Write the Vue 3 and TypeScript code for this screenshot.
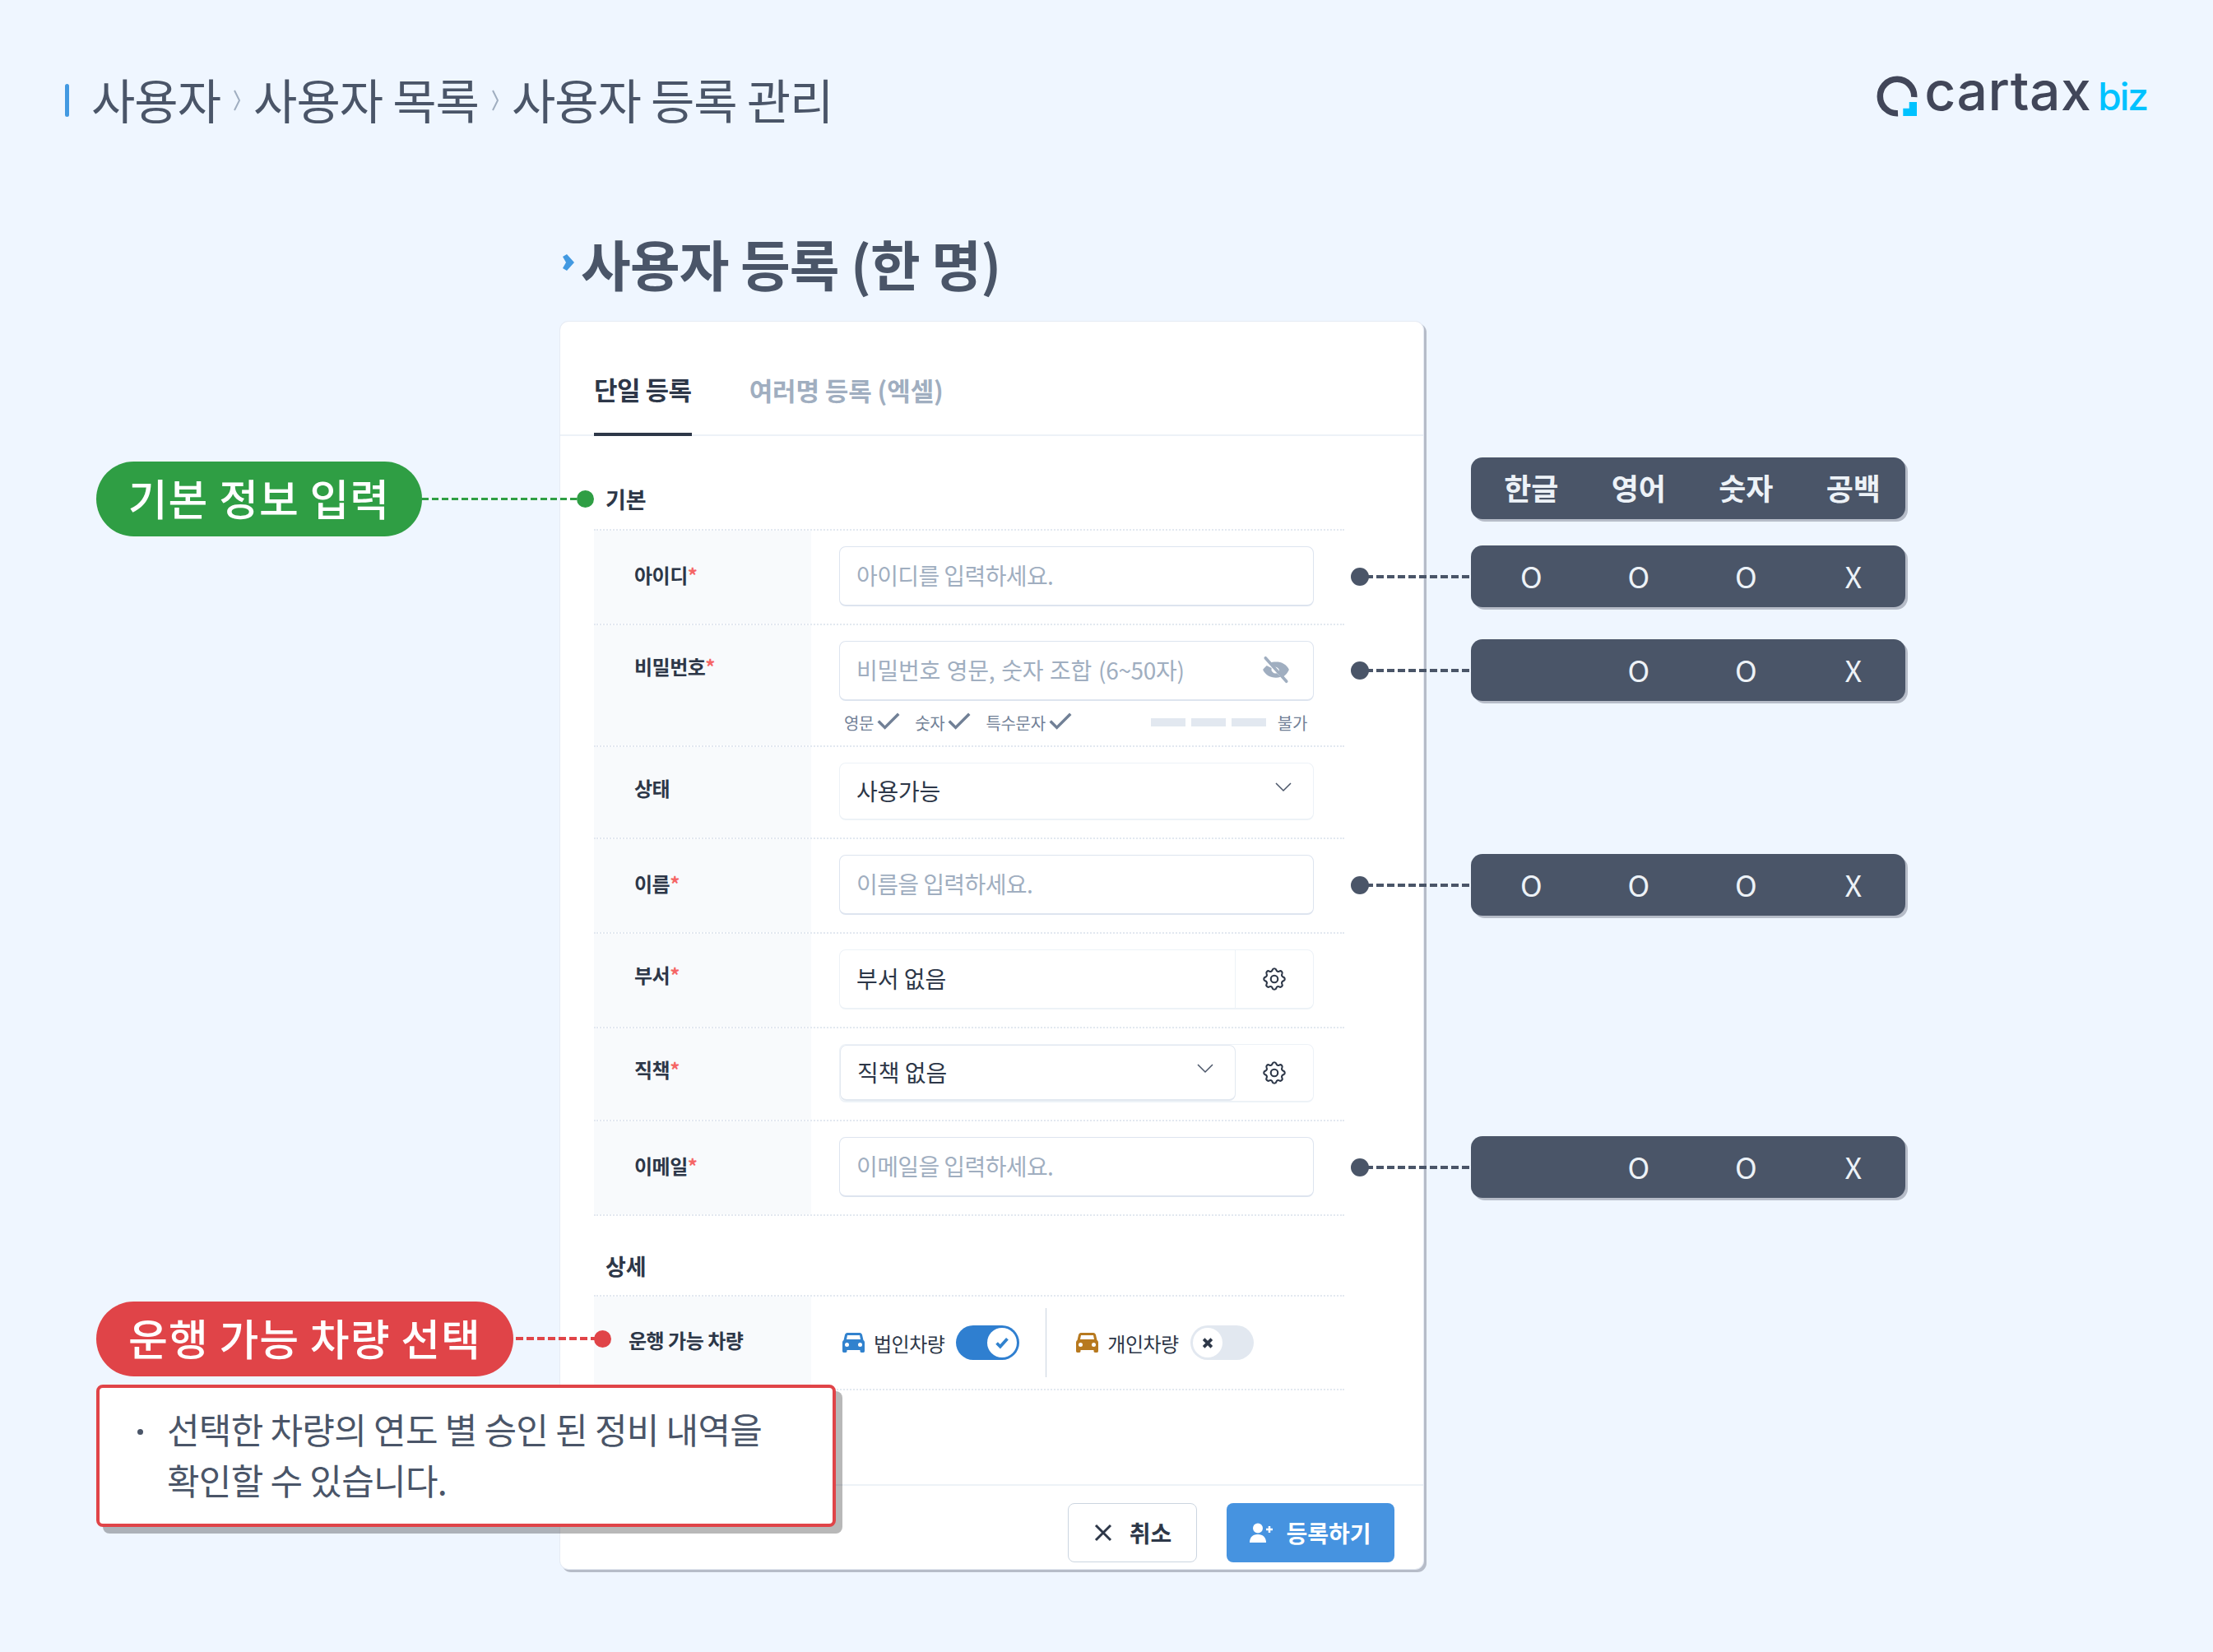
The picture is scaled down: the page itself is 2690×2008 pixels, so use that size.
<script setup lang="ts">
interface FormRow {
  label: string;
  required?: boolean;
  kind: 'input' | 'password' | 'select' | 'addon' | 'select-addon';
  text: string;
}

const rows: FormRow[] = [
  { label: '아이디', required: true, kind: 'input', text: '아이디를 입력하세요.' },
  { label: '비밀번호', required: true, kind: 'password', text: '비밀번호 영문, 숫자 조합 (6~50자)' },
  { label: '상태', kind: 'select', text: '사용가능' },
  { label: '이름', required: true, kind: 'input', text: '이름을 입력하세요.' },
  { label: '부서', required: true, kind: 'addon', text: '부서 없음' },
  { label: '직책', required: true, kind: 'select-addon', text: '직책 없음' },
  { label: '이메일', required: true, kind: 'input', text: '이메일을 입력하세요.' },
];

const hints = ['영문', '숫자', '특수문자'];

// 입력 규칙 표: 각 행의 위치는 폼 행에 맞춘다
const ruleRows = [
  { top: 663, cells: ['O', 'O', 'O', 'X'] },
  { top: 777, cells: ['', 'O', 'O', 'X'] },
  { top: 1038, cells: ['O', 'O', 'O', 'X'] },
  { top: 1381, cells: ['', 'O', 'O', 'X'] },
];
</script>

<template>
  <div class="page">
    <header class="top-bar">
      <div class="crumbs">
        <span class="crumb-bar"></span>
        <span>사용자</span>
        <svg class="crumb-sep" viewBox="0 0 10 30"><path d="M2 3l6 12-6 12" /></svg>
        <span>사용자 목록</span>
        <svg class="crumb-sep" viewBox="0 0 10 30"><path d="M2 3l6 12-6 12" /></svg>
        <span>사용자 등록 관리</span>
      </div>
      <div class="logo">
        <svg class="logo-mark" viewBox="0 0 50 50">
          <path d="M26 45.700A20.700 20.700 0 1 1 45.700 26" fill="none" stroke="#414659" stroke-width="7.500" />
          <path d="M39.700 32H49V49H32.300V39.700H39.700z" fill="#00c2ff" />
        </svg>
        <span class="logo-name">cartax</span>
        <span class="logo-biz">biz</span>
      </div>
    </header>

    <h1 class="title">
      <svg class="title-mark" viewBox="0 0 14 20"><path d="M0 3l5-3 9 10-9 10-5-3 4-7z" /></svg>
      사용자 등록 (한 명)
    </h1>

    <section class="card">
      <nav class="tabs">
        <span class="tab active">단일 등록</span>
        <span class="tab">여러명 등록 (엑셀)</span>
      </nav>

      <div class="body">
        <h2 class="group-title first">기본</h2>
        <div class="rows">
          <div v-for="row in rows" :key="row.label" class="row">
            <div class="label" :class="{ raised: row.kind !== 'input' }">
              {{ row.label }}<span v-if="row.required" class="req">*</span>
            </div>
            <div class="field">
              <div v-if="row.kind === 'input'" class="control placeholder">{{ row.text }}</div>

              <template v-else-if="row.kind === 'password'">
                <div class="control placeholder pw">
                  {{ row.text }}
                  <svg class="eye" viewBox="0 0 24 24">
                    <path d="M12 5.500c-2 0-3.800.600-5.300 1.500l3 3a3.500 3.500 0 0 1 4.600 4.600l3.300 3.300c2.300-1.500 4-3.500 5-5.900-1.800-4-5.800-6.500-10.600-6.500z" />
                    <path d="M4.500 8.600C3.100 9.800 2 11.300 1.400 12c1.800 4 5.800 6.500 10.600 6.500 1.300 0 2.500-.2 3.700-.6l-3-3a3.500 3.500 0 0 1-4.300-4.300z" />
                    <path class="slash" d="M3.500 2.500l17 19" />
                  </svg>
                </div>
                <div class="hints">
                  <span v-for="hint in hints" :key="hint" class="hint">
                    {{ hint }}
                    <svg viewBox="0 0 32 24"><path d="M2 12l9 9L30 2" /></svg>
                  </span>
                  <span class="meter"><i></i><i></i><i></i></span>
                  <span class="meter-text">불가</span>
                </div>
              </template>

              <div v-else-if="row.kind === 'select'" class="control select">
                {{ row.text }}
                <svg class="chev" viewBox="0 0 20 12"><path d="M1 1l9 9 9-9" /></svg>
              </div>

              <div v-else class="group" :class="{ tall: row.kind === 'addon' }">
                <div v-if="row.kind === 'addon'" class="group-main">{{ row.text }}</div>
                <div v-else class="group-select">
                  {{ row.text }}
                  <svg class="chev" viewBox="0 0 20 12"><path d="M1 1l9 9 9-9" /></svg>
                </div>
                <div class="group-btn">
                  <svg class="gear" viewBox="0 0 24 24">
                    <path d="M10.325 4.317c.426-1.756 2.924-1.756 3.350 0a1.724 1.724 0 0 0 2.573 1.066c1.543-.940 3.310.826 2.370 2.370a1.724 1.724 0 0 0 1.065 2.572c1.756.426 1.756 2.924 0 3.350a1.724 1.724 0 0 0-1.066 2.573c.940 1.543-.826 3.310-2.370 2.370a1.724 1.724 0 0 0-2.572 1.065c-.426 1.756-2.924 1.756-3.350 0a1.724 1.724 0 0 0-2.573-1.066c-1.543.940-3.310-.826-2.370-2.370a1.724 1.724 0 0 0-1.065-2.572c-1.756-.426-1.756-2.924 0-3.350a1.724 1.724 0 0 0 1.066-2.573c-.940-1.543.826-3.310 2.370-2.370.996.608 2.296.070 2.572-1.065z" />
                    <circle cx="12" cy="12" r="3" />
                  </svg>
                </div>
              </div>
            </div>
          </div>
        </div>

        <h2 class="group-title second">상세</h2>
        <div class="rows detail">
          <div class="row">
            <div class="label narrow">운행 가능 차량</div>
            <div class="field vehicles">
              <svg class="car blue" viewBox="0 0 27 24">
                <path d="M6 0h15c1.500 0 2.500 1 3 2.500L25.500 9c1 .6 1.500 1.500 1.500 3v10c0 1-.6 2-1.500 2H23c-1 0-1.500-1-1.500-2v-1h-16v1c0 1-.5 2-1.500 2H1.500C.6 24 0 23 0 22V12c0-1.500.5-2.400 1.500-3L3 2.500C3.500 1 4.500 0 6 0zm0 3L5 8h17l-1-5zM5.500 12a2.500 2.500 0 1 0 0 5 2.500 2.500 0 0 0 0-5zm16 0a2.500 2.500 0 1 0 0 5 2.500 2.500 0 0 0 0-5z" />
              </svg>
              <span class="vehicle-name">법인차량</span>
              <span class="switch on">
                <span class="knob">
                  <svg viewBox="0 0 16 14"><path d="M2 7l4 4 8-9" /></svg>
                </span>
              </span>
              <span class="vline"></span>
              <svg class="car brown" viewBox="0 0 27 24">
                <path d="M6 0h15c1.500 0 2.500 1 3 2.500L25.500 9c1 .6 1.500 1.500 1.500 3v10c0 1-.6 2-1.500 2H23c-1 0-1.500-1-1.500-2v-1h-16v1c0 1-.5 2-1.500 2H1.500C.6 24 0 23 0 22V12c0-1.500.5-2.400 1.500-3L3 2.500C3.500 1 4.500 0 6 0zm0 3L5 8h17l-1-5zM5.500 12a2.500 2.500 0 1 0 0 5 2.500 2.500 0 0 0 0-5zm16 0a2.500 2.500 0 1 0 0 5 2.500 2.500 0 0 0 0-5z" />
              </svg>
              <span class="vehicle-name">개인차량</span>
              <span class="switch off">
                <span class="knob">
                  <svg viewBox="0 0 14 14"><path d="M2.500 2.500l9 9M11.500 2.500l-9 9" /></svg>
                </span>
              </span>
            </div>
          </div>
        </div>
      </div>

      <footer class="foot">
        <button class="btn cancel">
          <svg viewBox="0 0 24 24"><path d="M3 3l18 18M21 3L3 21" /></svg>
          취소
        </button>
        <button class="btn save">
          <svg viewBox="0 0 28 24">
            <circle cx="10" cy="6.500" r="6" />
            <path d="M0 24c0-6 3.500-10 10-10s10 4 10 10z" />
            <path d="M20 8h8M24 4v8" class="plus" />
          </svg>
          등록하기
        </button>
      </footer>
    </section>

    <!-- 주석 레이어 -->
    <div class="pill green">기본 정보 입력</div>
    <span class="wire green-wire"></span>
    <span class="dot green-dot"></span>

    <div class="pill red">운행 가능 차량 선택</div>
    <span class="wire red-wire"></span>
    <span class="dot red-dot"></span>

    <div class="note">
      <p>선택한 차량의 연도 별 승인 된 정비 내역을<br />확인할 수 있습니다.</p>
    </div>

    <div class="rule head">
      <span>한글</span><span>영어</span><span>숫자</span><span>공백</span>
    </div>
    <template v-for="r in ruleRows" :key="r.top">
      <div class="rule" :style="{ top: r.top + 'px' }">
        <span v-for="(c, i) in r.cells" :key="i">{{ c }}</span>
      </div>
      <span class="rule-wire" :style="{ top: r.top + 36 + 'px' }"></span>
      <span class="rule-dot" :style="{ top: r.top + 27 + 'px' }"></span>
    </template>
  </div>
</template>

<style>
html,
body {
  margin: 0;
  background: #eff6ff;
}
</style>

<style scoped>
.page {
  position: relative;
  width: 2690px;
  height: 2008px;
  box-sizing: border-box;
  padding: 78px 80px 0 79px;
  background: #eff6ff;
  color: #4a5568;
  font-family: "Noto Sans CJK KR", "Noto Sans", sans-serif;
  overflow: hidden;
}

.top-bar {
  display: flex;
  align-items: flex-start;
  justify-content: space-between;
  height: 84px;
}

.crumbs {
  display: flex;
  align-items: center;
  height: 84px;
  font-size: 58px;
  letter-spacing: -1px;
  color: #4a5568;
}

.crumb-bar {
  width: 5px;
  height: 40px;
  margin: 4px 27px 0 0;
  border-radius: 3px;
  background: #4299e1;
}

.crumb-sep {
  width: 10px;
  height: 30px;
  margin: 4px 15px 0;
  fill: none;
  stroke: #a0aec0;
  stroke-width: 2;
}

.logo {
  display: flex;
  align-items: flex-start;
}

.logo-mark {
  width: 50px;
  height: 50px;
  margin: 14px 8px 0 0;
}

.logo-name {
  margin-top: -4px;
  font-family: "Inter", sans-serif;
  font-size: 66px;
  line-height: 72px;
  font-weight: 500;
  letter-spacing: 0.5px;
  color: #414659;
}

.logo-biz {
  margin: 3px 0 0 8px;
  font-family: "Inter", sans-serif;
  font-size: 46px;
  line-height: 72px;
  font-weight: 500;
  letter-spacing: -2px;
  color: #00c2ff;
}

.title {
  display: flex;
  align-items: center;
  gap: 8px;
  height: 90px;
  margin: 112px 0 0 605px;
  font-size: 66px;
  font-weight: 700;
  letter-spacing: -0.8px;
  color: #4a5568;
}

.title-mark {
  width: 14px;
  height: 20px;
  fill: #4299e1;
}

.card {
  display: flex;
  flex-direction: column;
  box-sizing: border-box;
  width: 1049px;
  height: 1516px;
  margin: 27px 0 0 602px;
  border-radius: 10px;
  background: #fff;
  box-shadow: 0 0 0 1px #e6ebf4, 3px 3px 0 1px #b6bcc8;
}

.tabs {
  display: flex;
  gap: 70px;
  height: 139px;
  box-sizing: border-box;
  padding: 0 41px;
  border-bottom: 2px solid #edf2f7;
}

.tab {
  display: flex;
  align-items: center;
  height: 139px;
  padding-top: 26px;
  box-sizing: border-box;
  font-size: 31px;
  font-weight: 700;
  letter-spacing: -0.1px;
  color: #a0aec0;
}

.tab.active {
  padding-top: 28px;
  color: #2d3748;
  border-bottom: 4px solid #2d3748;
  letter-spacing: -0.5px;
}

.body {
  padding: 0 96px 0 41px;
}

.group-title {
  display: flex;
  align-items: center;
  height: 44px;
  margin: 0;
  padding-left: 14px;
  font-size: 27px;
  font-weight: 700;
  color: #2d3748;
}

.group-title.first {
  margin-top: 54px;
  margin-bottom: 15px;
}

.group-title.second {
  margin-top: 38px;
  margin-bottom: 14px;
}

.rows {
  border-bottom: 2px dotted #e2e8f0;
}

.row {
  display: grid;
  grid-template-columns: 264px 1fr;
  border-top: 2px dotted #e2e8f0;
}

.label {
  padding: 37px 0 0 49px;
  background: #f8fafc;
  font-size: 24px;
  line-height: 34px;
  font-weight: 700;
  letter-spacing: -0.5px;
  color: #2d3748;
}

.label.raised {
  padding-top: 33px;
}

.label.narrow {
  padding: 36px 0 0 42px;
}

.req {
  color: #f56565;
}

.field {
  padding: 19px 37px 21px 34px;
}

.control {
  display: flex;
  align-items: center;
  box-sizing: border-box;
  height: 73px;
  padding: 0 20px 2px;
  border: 1px solid #cbd5e0;
  border-bottom-width: 2px;
  border-radius: 8px;
  background: #fff;
  font-size: 28px;
  letter-spacing: -0.6px;
}

.placeholder {
  border-color: #dde4ef;
  color: #a0aec0;
}

.pw {
  justify-content: space-between;
  padding-right: 27px;
  letter-spacing: -0.3px;
  word-spacing: 2px;
}

.eye {
  width: 36px;
  height: 36px;
  fill: #a0aec0;
}

.eye .slash {
  fill: none;
  stroke: #a0aec0;
  stroke-width: 2.400;
  stroke-linecap: round;
}

.hints {
  display: flex;
  align-items: center;
  height: 24px;
  margin: 14px 0 -5px 6px;
  font-size: 20px;
  letter-spacing: -0.3px;
  color: #718096;
}

.hint {
  display: flex;
  align-items: center;
  gap: 4px;
  margin-right: 18px;
}

.hint svg {
  width: 28px;
  height: 21px;
  fill: none;
  stroke: #718096;
  stroke-width: 4;
  transform: translateY(-2px);
}

.meter {
  display: flex;
  gap: 7px;
  margin-left: auto;
  margin-right: 14px;
}

.meter i {
  display: block;
  width: 42px;
  height: 10px;
  background: #e2e8f0;
}

.meter-text {
  margin-right: 8px;
}

.select {
  justify-content: space-between;
  height: 70px;
  border-color: #edf2f7;
  letter-spacing: -0.3px;
  color: #2d3748;
}

.chev {
  width: 20px;
  height: 12px;
  margin-top: -8px;
  margin-right: 6px;
  fill: none;
  stroke: #4a5568;
  stroke-width: 1.500;
}

.group {
  display: flex;
  box-sizing: border-box;
  height: 71px;
  border: 1px solid #edf2f7;
  border-bottom-width: 2px;
  border-radius: 8px;
  font-size: 28px;
  color: #2d3748;
}

.group.tall {
  height: 73px;
}

.group-main {
  display: flex;
  align-items: center;
  flex: 1;
  padding: 0 20px 2px;
}

.group-select {
  display: flex;
  align-items: center;
  justify-content: space-between;
  flex: 1;
  box-sizing: border-box;
  height: 68px;
  padding: 0 20px 2px;
  border: 1px solid #e2e8f0;
  border-bottom-width: 2px;
  border-radius: 8px;
}

.group-btn {
  display: flex;
  align-items: center;
  justify-content: center;
  flex: none;
  width: 94px;
  border-left: 1px solid #edf2f7;
}

.group-select + .group-btn {
  border-left: none;
}

.gear {
  width: 34px;
  height: 34px;
  fill: none;
  stroke: #2d3748;
  stroke-width: 1.500;
}

.vehicles {
  display: flex;
  align-items: center;
  height: 112px;
  box-sizing: border-box;
  padding: 0 0 0 38px;
}

.car {
  flex: none;
  width: 27px;
  height: 24px;
  fill-rule: evenodd;
}

.car.blue {
  fill: #3182ce;
}

.car.brown {
  fill: #b7791f;
}

.vehicle-name {
  margin: 0 14px 0 11px;
  font-size: 24px;
  letter-spacing: -0.5px;
  color: #2d3748;
}

.switch {
  display: flex;
  align-items: center;
  box-sizing: border-box;
  width: 77px;
  height: 42px;
  padding: 0 3px;
  border-radius: 21px;
}

.switch.on {
  justify-content: flex-end;
  background: #2f7fd0;
}

.switch.off {
  background: #e2e8f0;
}

.knob {
  display: flex;
  align-items: center;
  justify-content: center;
  width: 36px;
  height: 36px;
  border-radius: 50%;
  background: #fff;
}

.knob svg {
  width: 18px;
  height: 15px;
  fill: none;
  stroke-width: 3.500;
}

.switch.on svg {
  stroke: #3182ce;
}

.switch.off svg {
  stroke: #2d3748;
}

.vline {
  width: 1px;
  height: 84px;
  margin: 0 36px 0 32px;
  background: #cbd5e0;
}

.foot {
  display: flex;
  justify-content: flex-end;
  gap: 36px;
  margin-top: auto;
  height: 103px;
  box-sizing: border-box;
  padding: 21px 35px 0 0;
  border-top: 2px solid #edf2f7;
}

.btn {
  display: flex;
  align-items: center;
  justify-content: center;
  box-sizing: border-box;
  height: 72px;
  padding-bottom: 2px;
  border-radius: 8px;
  font-family: inherit;
  font-size: 28px;
  font-weight: 700;
}

.cancel {
  gap: 20px;
  width: 157px;
  padding-left: 6px;
  border: 1px solid #cbd5e0;
  background: #fff;
  color: #2d3748;
}

.cancel svg {
  width: 24px;
  height: 24px;
  fill: none;
  stroke: #2d3748;
  stroke-width: 3;
}

.save {
  gap: 16px;
  width: 204px;
  border: none;
  background: #4693e0;
  color: #fff;
}

.save svg {
  width: 28px;
  height: 24px;
  fill: #fff;
}

.save .plus {
  fill: none;
  stroke: #fff;
  stroke-width: 2.500;
}

.pill {
  position: absolute;
  left: 117px;
  display: flex;
  align-items: center;
  justify-content: center;
  box-sizing: border-box;
  height: 91px;
  padding-bottom: 5px;
  border-radius: 46px;
  color: #fff;
  font-size: 52px;
  font-weight: 500;
  letter-spacing: 1px;
}

.pill.green {
  top: 561px;
  width: 396px;
  background: #2f9e44;
}

.pill.red {
  top: 1582px;
  width: 507px;
  background: #e04448;
}

.wire {
  position: absolute;
  height: 3px;
}

.green-wire {
  left: 513px;
  top: 605px;
  width: 198px;
  background: repeating-linear-gradient(90deg, #2f9e44 0 8px, transparent 8px 12px);
}

.red-wire {
  left: 627px;
  top: 1625px;
  width: 105px;
  height: 4px;
  background: repeating-linear-gradient(90deg, #e04448 0 9px, transparent 9px 13px);
}

.dot {
  position: absolute;
  width: 21px;
  height: 21px;
  border-radius: 50%;
}

.green-dot {
  left: 701px;
  top: 596px;
  background: #2f9e44;
}

.red-dot {
  left: 722px;
  top: 1617px;
  background: #e04448;
}

.note {
  position: absolute;
  left: 117px;
  top: 1683px;
  box-sizing: border-box;
  width: 899px;
  height: 173px;
  border: 4px solid #e04448;
  border-radius: 8px;
  background: #fff;
  box-shadow: 8px 8px 0 rgba(0, 0, 0, 0.28);
}

.note p {
  position: relative;
  margin: 0;
  padding: 18px 0 0 82px;
  font-size: 43px;
  line-height: 62px;
  letter-spacing: -0.7px;
  color: #4a5568;
}

.note p::before {
  content: "";
  position: absolute;
  left: 46px;
  top: 50px;
  width: 7px;
  height: 7px;
  border-radius: 50%;
  background: #4a5568;
}

.rule {
  position: absolute;
  left: 1788px;
  display: grid;
  grid-template-columns: repeat(4, 130.500px);
  align-items: center;
  justify-items: center;
  box-sizing: border-box;
  width: 528px;
  height: 75px;
  padding: 0 0 4px 8px;
  border-radius: 14px;
  background: #4a5568;
  box-shadow: 3px 3px 0 #b6bcc8;
  color: #edf2f7;
  font-size: 36px;
}

.rule.head {
  top: 556px;
  font-weight: 700;
}

.rule-wire {
  position: absolute;
  left: 1660px;
  width: 128px;
  height: 4px;
  background: repeating-linear-gradient(90deg, #4a5568 0 9px, transparent 9px 13px);
}

.rule-dot {
  position: absolute;
  left: 1642px;
  width: 22px;
  height: 22px;
  border-radius: 50%;
  background: #4a5568;
}
</style>
